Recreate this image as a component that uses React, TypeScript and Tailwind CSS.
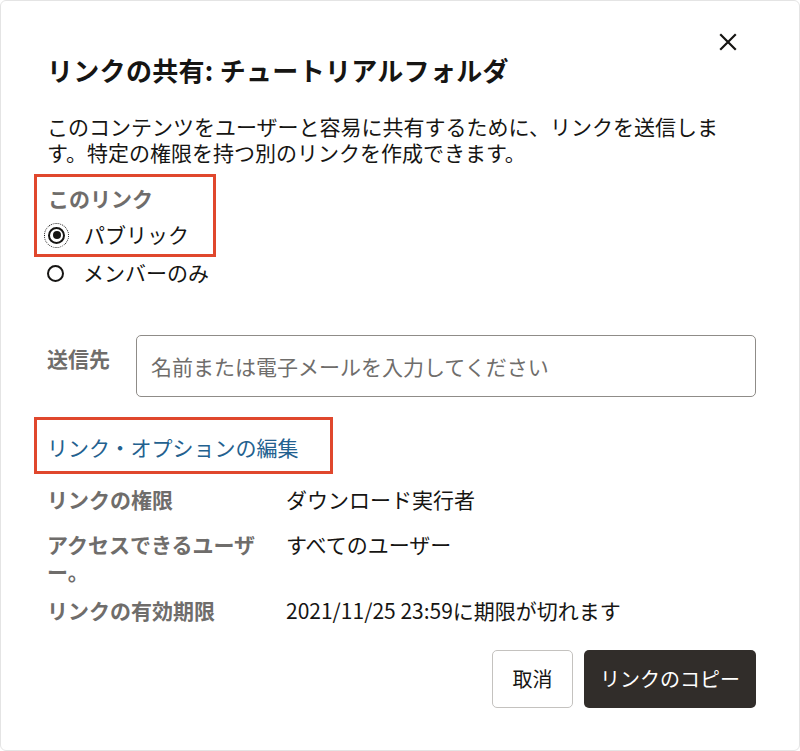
import React, { useState } from 'react';

const Radio = ({ checked, focused }: { checked: boolean; focused?: boolean }) => (
  <span
    className={`w-[17px] h-[17px] rounded-full border-2 border-[#161513] flex items-center justify-center shrink-0 ${focused ? 'outline outline-1 outline-dotted outline-[#161513] outline-offset-[3px]' : ''}`}
  >
    {checked && <span className="w-[8px] h-[8px] rounded-full bg-[#161513]" />}
  </span>
);

const InfoRow = ({ label, value, className = '' }: { label: string; value: string; className?: string }) => (
  <div className={`flex leading-[27px] ${className}`}>
    <div className="w-[239px] pr-[24px] shrink-0 font-bold text-[#6f6d6b]">{label}</div>
    <div className="flex-1 text-[#161513]">{value}</div>
  </div>
);

export default function App() {
  const [scope, setScope] = useState<'public' | 'members'>('public');

  return (
    <div className="w-[800px] h-[751px] bg-white border border-[#e4e4e4] rounded-[6px] relative overflow-hidden font-['Noto_Sans_CJK_JP','Noto_Sans',sans-serif] text-[21px] text-[#161513]">
      <button className="absolute top-[29px] right-[59px] w-[24px] h-[24px] flex items-center justify-center" aria-label="閉じる">
        <svg width="18" height="18" viewBox="0 0 18 18" fill="none" stroke="#161513" strokeWidth="2.2" strokeLinecap="square">
          <path d="M2 2L16 16M16 2L2 16" />
        </svg>
      </button>

      <div className="pl-[46px] pr-[43px] pt-[53px] flex flex-col">
        <h1 className="text-[26px] leading-[32px] font-bold tracking-[0.3px]">リンクの共有: チュートリアルフォルダ</h1>

        <p className="mt-[27px] max-w-[690px] leading-[26px]">
          このコンテンツをユーザーと容易に共有するために、リンクを送信します。特定の権限を持つ別のリンクを作成できます。
        </p>

        <div className="mt-[9px] -ml-[13px] w-[182px] border-[3px] border-[#e0472d] pl-[11px] pt-[8px] pb-[5px]">
          <div className="font-bold text-[#6f6d6b] leading-[26px]">このリンク</div>
          <label className="mt-[10px] h-[28px] flex items-center gap-[19px] cursor-pointer" onClick={() => setScope('public')}>
            <Radio checked={scope === 'public'} focused />
            <span>パブリック</span>
          </label>
        </div>

        <label className="mt-[2px] h-[28px] flex items-center gap-[19px] cursor-pointer" onClick={() => setScope('members')}>
          <Radio checked={scope === 'members'} />
          <span>メンバーのみ</span>
        </label>

        <div className="mt-[48px] flex items-start">
          <div className="w-[89px] shrink-0 pt-[10px] font-bold text-[#6f6d6b] leading-[26px]">送信先</div>
          <input
            className="flex-1 h-[62px] border border-[#8f8c88] rounded-[5px] px-[14px] text-[21px] placeholder:text-[#6f6d6b] outline-none"
            placeholder="名前または電子メールを入力してください"
          />
        </div>

        <div className="mt-[20px] -ml-[13px] w-[299px] border-[3px] border-[#e0472d] pl-[10px] pt-[14px] pb-[11px]">
          <a href="#" className="text-[#23618f] leading-[26px] block">リンク・オプションの編集</a>
        </div>

        <InfoRow className="mt-[12px]" label="リンクの権限" value="ダウンロード実行者" />
        <InfoRow className="mt-[18px]" label="アクセスできるユーザー。" value="すべてのユーザー" />
        <InfoRow className="mt-[12px]" label="リンクの有効期限" value="2021/11/25 23:59に期限が切れます" />

        <div className="mt-[26px] flex justify-end gap-[11px]">
          <button className="w-[81px] h-[58px] border border-[#c4c2bf] rounded-[5px] bg-white text-[20px]">取消</button>
          <button className="w-[172px] h-[58px] rounded-[5px] bg-[#312d2a] text-white text-[20px]">リンクのコピー</button>
        </div>
      </div>
    </div>
  );
}
